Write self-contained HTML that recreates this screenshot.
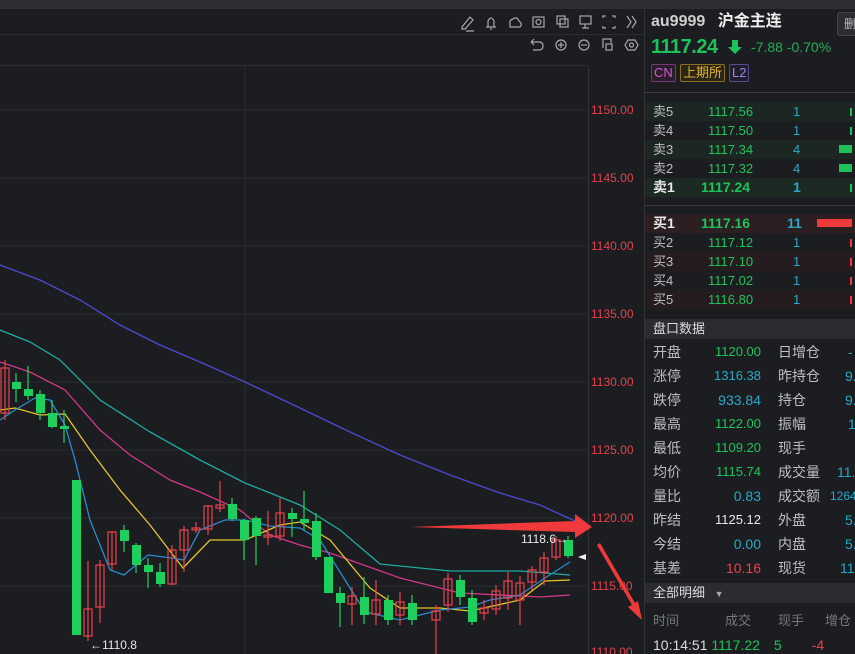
<!DOCTYPE html>
<html><head><meta charset="utf-8"><style>
*{margin:0;padding:0;box-sizing:border-box}
body{width:855px;height:654px;overflow:hidden;background:#1c1d21;font-family:"Liberation Sans","Noto Sans CJK SC",sans-serif;position:relative;color:#ccc}
.abs{position:absolute}
.rp{position:absolute;left:644px;top:9px;width:211px;height:645px;background:#1c1d21;border-left:1px solid #333}
.row{position:absolute;left:0;width:211px;height:19px;font-size:13px;line-height:19px}
.row span{position:absolute}
.g{color:#1fc25a}.c{color:#27a9c6}.r{color:#e8424a}.w{color:#e8e8e8}.lb{color:#bfbfbf}
.sec{position:absolute;left:0;width:211px;height:20px;background:#2b2c31;font-size:13px;line-height:20px;padding-left:8px;color:#ddd}
.tag{position:absolute;top:55px;font-size:13px;height:18px;line-height:16px;padding:0 2px;border-radius:2px}
</style></head><body>
<div class="abs" style="left:0;top:0;width:855px;height:9px;background:#2e2f34"></div>
<div class="abs" style="left:0;top:34px;width:644px;height:1px;background:#2a2b2f"></div>
<div class="abs" style="left:0;top:65px;width:588px;height:1px;background:#2f3034"></div>
<svg class="abs" style="left:0;top:0" width="644" height="654">
<g stroke="#a8a8a8" stroke-width="1.2" fill="none">
<path d="M462 27 L470 17 L473 20 L465 29 L462 29Z M466 31 H474"/>
<path d="M486 27 H496 M488 27 V21 Q491 15 494 21 V27 M490 29 H492"/>
<path d="M510 27 H520 Q523 24 519 21 Q517 16 513 19 Q509 20 510 24 Z"/>
<rect x="533" y="17" width="11" height="10"/><circle cx="538.5" cy="22" r="2.5"/>
<rect x="557" y="16" width="8" height="8"/><rect x="560" y="19" width="8" height="8"/>
<rect x="580" y="16" width="11" height="8"/><path d="M585 24 V28 M582 28 H589"/>
<path d="M603 18 V16 H606 M612 16 H615 V18 M603 26 V28 H606 M612 28 H615 V26"/>
<path d="M627 16 L631 22 L627 28 M632 16 L636 22 L632 28"/>
<path d="M531 42 L534 39 M531 42 L534 45 M531 42 H539 Q543 42 543 46 Q543 50 539 50 H533"/>
<circle cx="561" cy="45" r="5"/><path d="M558 45 H564 M561 42 V48"/>
<circle cx="584" cy="45" r="5"/><path d="M581 45 H587"/>
<path d="M603 48 V39 H611 V43"/><rect x="606" y="44" width="6" height="6"/>
<path d="M628 40 L635 40 L638 45 L635 50 L628 50 L625 45Z"/><circle cx="631.5" cy="45" r="2"/>
</g>
<g stroke="#2a2b2f" stroke-width="1">
<path d="M0 110H588M0 178H588M0 246H588M0 314H588M0 382H588M0 450H588M0 518H588M0 586H588M245 66V654"/>
</g>
<path d="M588.5 66V654" stroke="#333" />
<g font-size="12" fill="#e0424b">
<text x="591" y="114">1150.00</text><text x="591" y="182">1145.00</text><text x="591" y="250">1140.00</text><text x="591" y="318">1135.00</text><text x="591" y="386">1130.00</text><text x="591" y="454">1125.00</text><text x="591" y="522">1120.00</text><text x="591" y="590">1115.00</text><text x="591" y="656">1110.00</text>
</g>
<g fill="none" stroke-width="1.3">
<polyline stroke="#4a4ad0" points="0,265 40,280 80,300 120,325 160,345 200,362 245,382 300,408 350,432 400,455 450,475 500,493 540,505 575,521"/>
<polyline stroke="#1eaaa0" points="0,330 30,342 60,360 100,400 150,432 200,460 245,483 300,505 340,530 380,564 450,571 520,571 570,575"/>
<polyline stroke="#d2378a" points="0,362 30,372 65,390 100,430 130,455 170,480 200,492 240,510 270,535 300,545 330,553 400,578 460,593 500,595 540,597 570,595"/>
<polyline stroke="#e5c32a" points="0,410 15,408 40,415 65,414 90,450 120,490 150,525 183,568 210,540 245,540 280,525 300,522 330,540 370,588 400,608 440,608 470,611 520,600 545,581 570,580"/>
<polyline stroke="#2a8bd0" points="0,420 15,410 35,398 50,400 65,425 75,460 90,520 110,570 124,575 148,555 172,558 184,560 200,530 225,520 245,520 270,526 300,528 320,540 345,580 365,612 400,620 440,610 470,607 490,600 520,595 545,578 570,562"/>
</g>
<g fill="none" stroke="#e8424a" stroke-width="1.2">
<path d="M5 360V420M88 561V641M100 560V623M112 531V570M172 545V585M184 526V572M196 522V533M208 505V535M220 481V512M268 511V545M280 498V541M352 587V625M376 580V625M400 592V625M436 605V654M448 573V612M484 600V620M496 585V615M508 572V610M520 576V625M532 566V590M544 552V585M556 536V560"/>
<rect x="1" y="368" width="8" height="45"/><rect x="84" y="609" width="8" height="27"/><rect x="96" y="565" width="8" height="42"/><rect x="108" y="532" width="8" height="32"/><rect x="168" y="550" width="8" height="34"/><rect x="180" y="530" width="8" height="20"/><rect x="192" y="528" width="8" height="2"/><rect x="204" y="506" width="8" height="23"/><rect x="216" y="505" width="8" height="3"/><rect x="264" y="535" width="8" height="2"/><rect x="276" y="513" width="8" height="23"/><rect x="348" y="596" width="8" height="8"/><rect x="372" y="600" width="8" height="14"/><rect x="396" y="602" width="8" height="13"/><rect x="432" y="611" width="8" height="9"/><rect x="444" y="579" width="8" height="26"/><rect x="480" y="608" width="8" height="5"/><rect x="492" y="591" width="8" height="18"/><rect x="504" y="581" width="8" height="17"/><rect x="516" y="583" width="8" height="17"/><rect x="528" y="570" width="8" height="12"/><rect x="540" y="558" width="8" height="14"/><rect x="552" y="540" width="8" height="17"/>
</g>
<g stroke="#1fcf5e" stroke-width="1.2">
<path d="M16 373V402M28 366V400M40 390V420M52 400V428M64 410V443M124 525V552M136 543V573M148 558V588M160 563V587M232 498V521M244 519V560M256 516V565M292 508V537M304 491V530M316 513V560M340 587V627M364 577V624M388 595V625M412 595V625M460 575V605M472 590V625M568 536V558"/>
</g>
<g fill="#1fcf5e">
<rect x="12" y="382" width="9" height="7"/><rect x="24" y="389" width="9" height="7"/><rect x="36" y="394" width="9" height="19"/><rect x="48" y="413" width="9" height="14"/><rect x="60" y="426" width="9" height="3"/><rect x="72" y="480" width="9" height="155"/><rect x="120" y="530" width="9" height="11"/><rect x="132" y="545" width="9" height="20"/><rect x="144" y="565" width="9" height="7"/><rect x="156" y="572" width="9" height="12"/><rect x="228" y="504" width="9" height="15"/><rect x="240" y="520" width="9" height="20"/><rect x="252" y="518" width="9" height="18"/><rect x="288" y="513" width="9" height="6"/><rect x="300" y="519" width="9" height="4"/><rect x="312" y="521" width="9" height="36"/><rect x="324" y="557" width="9" height="36"/><rect x="336" y="593" width="9" height="10"/><rect x="360" y="597" width="9" height="18"/><rect x="384" y="600" width="9" height="20"/><rect x="408" y="603" width="9" height="17"/><rect x="456" y="580" width="9" height="17"/><rect x="468" y="598" width="9" height="24"/><rect x="564" y="540" width="9" height="16"/>
</g>
<text x="90" y="649" font-size="12" fill="#e8e8e8">←1110.8</text>
<text x="521" y="543" font-size="12" fill="#e8e8e8">1118.6→</text>
<path d="M578 557 L586 554 L586 560Z" fill="#eee"/>
<path d="M410 527 L575 521 L575 514 L592 527 L575 538 L575 532 Z" fill="#ee3a3a"/>
<path d="M597 545 L632 605 L628 607 L642 620 L638 601 L635 603 L600 543 Z" fill="#ee3a3a"/>
</svg>
<div class="rp">
<div class="abs" style="left:6px;top:2px;font-size:16px;font-weight:bold;color:#cfcfcf;line-height:22px">au9999 <span style="margin-left:8px;color:#eee">沪金主连</span></div>
<div class="abs" style="left:192px;top:3px;width:24px;height:24px;background:#2c2d32;border:1px solid #444;border-radius:3px;font-size:12px;line-height:22px;padding-left:6px;color:#bbb">删</div>
<div class="abs" style="left:6px;top:27px;font-size:20px;line-height:22px;font-weight:bold;letter-spacing:-0.5px"><span class="g">1117.24</span></div>
<svg class="abs" style="left:82px;top:30px" width="16" height="16"><path d="M5 1H11V8H15L8 15L1 8H5Z" fill="#1fc25a"/></svg>
<div class="abs g" style="left:106px;top:30px;font-size:14px;color:#1fb055">-7.88 -0.70%</div>
<div class="tag" style="left:6px;border:1px solid #7a347a;color:#d05ad0;background:#2a1d2a">CN</div>
<div class="tag" style="left:35px;border:1px solid #8a7020;color:#e0b030;background:#2a2515">上期所</div>
<div class="tag" style="left:84px;border:1px solid #5a4a90;color:#9a88e0;background:#201d2c">L2</div>
<div class="abs" style="left:0;top:83px;width:211px;height:1px;background:#3a3b40"></div>
<div class="row" style="top:93px;background:#1c2622"><span class="lb" style="left:8px">卖5</span><span class="g" style="left:63px">1117.56</span><span class="c" style="left:148px">1</span><span style="left:205px;top:6px;width:2px;height:8px;background:#1fc25a"></span></div>
<div class="row" style="top:112px"><span class="lb" style="left:8px">卖4</span><span class="g" style="left:63px">1117.50</span><span class="c" style="left:148px">1</span><span style="left:205px;top:6px;width:2px;height:8px;background:#1fc25a"></span></div>
<div class="row" style="top:131px;background:#1c2622"><span class="lb" style="left:8px">卖3</span><span class="g" style="left:63px">1117.34</span><span class="c" style="left:148px">4</span><span style="left:194px;top:5px;width:13px;height:8px;background:#1fc25a"></span></div>
<div class="row" style="top:150px"><span class="lb" style="left:8px">卖2</span><span class="g" style="left:63px">1117.32</span><span class="c" style="left:148px">4</span><span style="left:194px;top:5px;width:13px;height:8px;background:#1fc25a"></span></div>
<div class="row" style="top:169px;background:#1d2a24;font-weight:bold;font-size:14px"><span class="w" style="left:8px">卖1</span><span class="g" style="left:56px">1117.24</span><span class="c" style="left:148px">1</span><span style="left:205px;top:6px;width:2px;height:8px;background:#1fc25a"></span></div>
<div class="abs" style="left:0;top:196px;width:211px;height:1px;background:#3a3b40"></div>
<div class="row" style="top:205px;background:#2c1e21;font-weight:bold;font-size:14px"><span class="w" style="left:8px">买1</span><span class="g" style="left:56px">1117.16</span><span class="c" style="left:142px">11</span><span style="left:172px;top:5px;width:35px;height:8px;background:#ee3a3a"></span></div>
<div class="row" style="top:224px"><span class="lb" style="left:8px">买2</span><span class="g" style="left:63px">1117.12</span><span class="c" style="left:148px">1</span><span style="left:205px;top:6px;width:2px;height:8px;background:#ee3a3a"></span></div>
<div class="row" style="top:243px;background:#241c1f"><span class="lb" style="left:8px">买3</span><span class="g" style="left:63px">1117.10</span><span class="c" style="left:148px">1</span><span style="left:205px;top:6px;width:2px;height:8px;background:#ee3a3a"></span></div>
<div class="row" style="top:262px"><span class="lb" style="left:8px">买4</span><span class="g" style="left:63px">1117.02</span><span class="c" style="left:148px">1</span><span style="left:205px;top:6px;width:2px;height:8px;background:#ee3a3a"></span></div>
<div class="row" style="top:281px;background:#241c1f"><span class="lb" style="left:8px">买5</span><span class="g" style="left:63px">1116.80</span><span class="c" style="left:148px">1</span><span style="left:205px;top:6px;width:2px;height:8px;background:#ee3a3a"></span></div>
<div class="sec" style="top:310px">盘口数据</div>
<div class="abs" style="left:0;top:331px;width:211px;font-size:14px;line-height:24px">
<div style="position:relative;height:24px"><span class="lb abs" style="left:8px">开盘</span><span class="g abs" style="right:95px;font-size:13px">1120.00</span><span class="lb abs" style="left:133px">日增仓</span><span class="c abs" style="left:203px">-</span></div>
<div style="position:relative;height:24px"><span class="lb abs" style="left:8px">涨停</span><span class="c abs" style="right:95px;font-size:13px">1316.38</span><span class="lb abs" style="left:133px">昨持仓</span><span class="c abs" style="left:200px">9.</span></div>
<div style="position:relative;height:24px"><span class="lb abs" style="left:8px">跌停</span><span class="c abs" style="right:95px">933.84</span><span class="lb abs" style="left:133px">持仓</span><span class="c abs" style="left:200px">9.</span></div>
<div style="position:relative;height:24px"><span class="lb abs" style="left:8px">最高</span><span class="g abs" style="right:95px;font-size:13px">1122.00</span><span class="lb abs" style="left:133px">振幅</span><span class="c abs" style="left:203px">1</span></div>
<div style="position:relative;height:24px"><span class="lb abs" style="left:8px">最低</span><span class="g abs" style="right:95px;font-size:13px">1109.20</span><span class="lb abs" style="left:133px">现手</span></div>
<div style="position:relative;height:24px"><span class="lb abs" style="left:8px">均价</span><span class="g abs" style="right:95px;font-size:13px">1115.74</span><span class="lb abs" style="left:133px">成交量</span><span class="c abs" style="left:192px">11.</span></div>
<div style="position:relative;height:24px"><span class="lb abs" style="left:8px">量比</span><span class="c abs" style="right:95px">0.83</span><span class="lb abs" style="left:133px">成交额</span><span class="c abs" style="left:185px;font-size:12px">1264</span></div>
<div style="position:relative;height:24px"><span class="lb abs" style="left:8px">昨结</span><span class="w abs" style="right:95px;font-size:13px">1125.12</span><span class="lb abs" style="left:133px">外盘</span><span class="c abs" style="left:200px">5.</span></div>
<div style="position:relative;height:24px"><span class="lb abs" style="left:8px">今结</span><span class="c abs" style="right:95px">0.00</span><span class="lb abs" style="left:133px">内盘</span><span class="c abs" style="left:200px">5.</span></div>
<div style="position:relative;height:24px"><span class="lb abs" style="left:8px">基差</span><span class="r abs" style="right:95px">10.16</span><span class="lb abs" style="left:133px">现货</span><span class="c abs" style="left:195px">11</span></div>
</div>
<div class="sec" style="top:574px">全部明细 <span style="font-size:9px;color:#aaa;margin-left:6px">▼</span></div>
<div class="abs" style="left:8px;top:601px;font-size:13px;color:#777">时间</div>
<div class="abs" style="left:80px;top:601px;font-size:13px;color:#777">成交</div>
<div class="abs" style="left:133px;top:601px;font-size:13px;color:#777">现手</div>
<div class="abs" style="left:180px;top:601px;font-size:13px;color:#777">增仓</div>
<div class="abs" style="left:8px;top:628px;font-size:14px;color:#ddd">10:14:51 <span class="g">1117.22</span><span class="g" style="margin-left:14px">5</span><span class="r" style="margin-left:30px">-4</span></div>
</div>
</body></html>
